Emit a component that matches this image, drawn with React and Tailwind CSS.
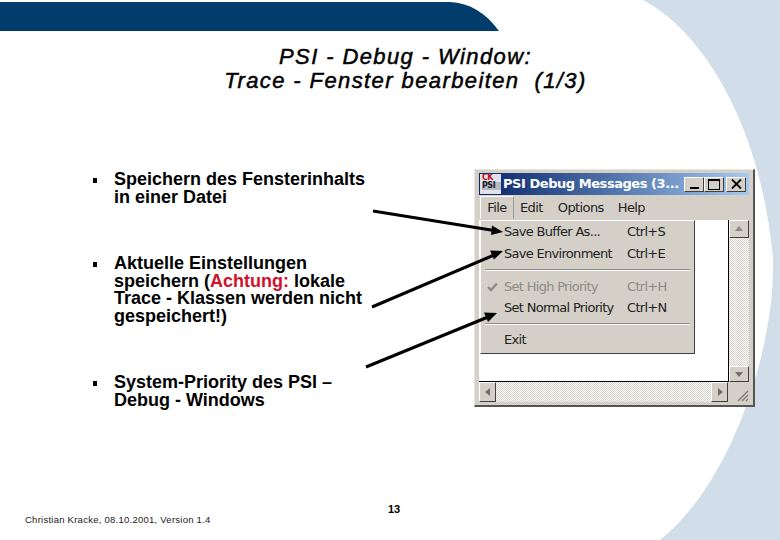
import { Fragment } from 'react';

const dither = 'bg-[repeating-conic-gradient(#d4d0c8_0_25%,#ffffff_0_50%)] bg-[length:2px_2px]';
const bevel = 'bg-[#d4d0c8] border border-t-white border-l-white border-r-[#404040] border-b-[#404040]';

const bullets = [
  [<Fragment key="a">Speichern des Fensterinhalts<br />in einer Datei</Fragment>, 'h-[35px]'],
  [
    <Fragment key="b">
      Aktuelle Einstellungen<br />
      speichern (<span className="text-[#d0112b]">Achtung:</span> lokale<br />
      Trace - Klassen werden nicht<br />
      gespeichert!)
    </Fragment>,
    'h-[70px]',
  ],
  [<Fragment key="c">System-Priority des PSI –<br />Debug - Windows</Fragment>, 'h-[35px]'],
];

const menuRows = [
  { label: 'Save Buffer As...', key: 'Ctrl+S', h: 'h-[21.5px]' },
  { label: 'Save Environment', key: 'Ctrl+E', h: 'h-[21.5px]' },
  { sep: 'h-[12px]' },
  { label: 'Set High Priority', key: 'Ctrl+H', off: true, check: true, h: 'h-[21px]' },
  { label: 'Set Normal Priority', key: 'Ctrl+N', h: 'h-[21.5px]' },
  { sep: 'h-[10.5px]' },
  { label: 'Exit', h: 'h-[21.5px]' },
];

const Arrows = () => (
  <svg className="absolute left-0 top-0 pointer-events-none" width="780" height="540">
    <path d="M373 211 L494 230.5 M372 307 L494 255 M366 367 L488 317" stroke="#000" strokeWidth="3" fill="none" />
    <polygon points="503,232 492,225.5 491,235" fill="#000" />
    <polygon points="503,251 490,250.5 494,259.5" fill="#000" />
    <polygon points="497,313 484,312.5 488,322" fill="#000" />
  </svg>
);

const ScrollButton = ({ dir, className }) => (
  <div className={`${bevel} flex items-center justify-center ${className}`}>
    <svg width="10" height="10" viewBox="0 0 10 10">
      {dir === 'up' && <path d="M5 2 L9 7 H1 Z" fill="#8a8a86" />}
      {dir === 'down' && <path d="M1 3 H9 L5 8 Z" fill="#6f6f6c" />}
      {dir === 'left' && <path d="M7 1 V9 L2 5 Z" fill="#6f6f6c" />}
      {dir === 'right' && <path d="M3 1 V9 L8 5 Z" fill="#6f6f6c" />}
    </svg>
  </div>
);

const CaptionButton = ({ children, className = '' }) => (
  <div className={`${bevel} w-[20px] h-[15px] flex items-center justify-center ${className}`}>{children}</div>
);

const DebugWindow = () => (
  <div className="relative w-[281px] h-[238px] bg-[#d4d0c8] border-t border-l border-[#e8e6e0] border-r-2 border-b-2 border-r-[#555] border-b-[#555] pt-[3px] px-[4px] pb-[3px] flex flex-col font-['DejaVu_Sans',sans-serif]">
    <div className="h-[22px] shrink-0 flex items-center bg-gradient-to-r from-[#0a246a] to-[#a6caf0] pl-[1px] pr-[3px]">
      <div className="w-[21px] h-[20px] bg-[#dfe2ea] flex flex-col pl-[2px] leading-none overflow-hidden">
        <span className="text-[8px] font-bold text-[#c01020] tracking-[-0.5px]">CK</span>
        <span className="text-[8px] font-bold text-[#1a1a2a] bg-[#b8bac2] tracking-[-0.5px]">PSI</span>
      </div>
      <span className="ml-[2px] text-[13px] font-bold text-white tracking-[-0.45px] whitespace-nowrap flex-1">PSI Debug Messages (3...</span>
      <CaptionButton>
        <span className="w-[9px] h-[2px] bg-black mt-[7px]" />
      </CaptionButton>
      <CaptionButton>
        <span className="w-[12px] h-[11px] border border-black border-t-2" />
      </CaptionButton>
      <CaptionButton className="ml-[2px]">
        <svg width="11" height="10" viewBox="0 0 11 10">
          <path d="M1 0.5 L10 9.5 M10 0.5 L1 9.5" stroke="#000" strokeWidth="1.8" />
        </svg>
      </CaptionButton>
    </div>

    <div className="h-[25px] shrink-0 flex items-center text-[13px] text-[#222] tracking-[-0.6px]">
      <span className="ml-[1px] w-[34px] h-[23px] flex items-center justify-center border border-t-white border-l-white border-r-[#9a9a94] border-b-[#d4d0c8] mr-[6px]">File</span>
      <span className="mr-[15px]">Edit</span>
      <span className="mr-[14px]">Options</span>
      <span>Help</span>
    </div>

    <div className="flex-1 flex flex-col min-h-0">
      <div className="flex-1 flex min-h-0">
        <div className="flex-1 bg-white border-r border-b border-black" />
        <div className={`w-[20px] flex flex-col ${dither}`}>
          <ScrollButton dir="up" className="h-[18px]" />
          <div className="flex-1" />
          <ScrollButton dir="down" className="h-[16px]" />
        </div>
      </div>
      <div className="h-[20px] shrink-0 flex">
        <div className={`flex-1 flex justify-between ${dither}`}>
          <ScrollButton dir="left" className="w-[17px]" />
          <ScrollButton dir="right" className="w-[17px]" />
        </div>
        <div className="w-[21px] flex items-end justify-end">
          <svg width="14" height="14" viewBox="0 0 14 14">
            <path d="M13 3 L3 13 M13 7 L7 13 M13 11 L11 13" stroke="#777" strokeWidth="1.2" />
          </svg>
        </div>
      </div>
    </div>

    <div className={`absolute left-[5px] top-[50px] w-[215px] h-[134px] ${bevel} text-[13px] text-[#222] tracking-[-0.7px]`}>
      {menuRows.map((row, i) =>
        row.sep ? (
          <div key={i} className={`${row.sep} flex items-center px-[4px]`}>
            <div className="w-full h-[2px] border-t border-[#8f8c85] border-b border-b-white" />
          </div>
        ) : (
          <div key={i} className={`relative ${row.h} flex items-center pl-[23px] ${row.off ? 'text-[#8d8b86]' : ''}`}>
            {row.check && (
              <svg className="absolute left-[6px] top-[6px]" width="11" height="10" viewBox="0 0 11 10">
                <path d="M1 5 L4 8 L10 1.5" stroke="#8d8b86" strokeWidth="2.4" fill="none" />
              </svg>
            )}
            <span className="w-[123px] whitespace-nowrap">{row.label}</span>
            {row.key && <span>{row.key}</span>}
          </div>
        ),
      )}
    </div>
  </div>
);

const App = () => (
  <div className="relative w-[780px] h-[540px] overflow-hidden bg-[#d1dde8] font-['Liberation_Sans',sans-serif] text-black">
    <svg className="absolute left-0 top-0" width="780" height="540">
      <path d="M0 0 H643 C700 30 760 120 773 258 C776 340 735 480 660 540 H0 Z" fill="#fff" />
    </svg>

    <div className="relative flex flex-col h-full">
      <div className="mt-[2px] h-[29px] flex shrink-0">
        <div className="w-[450px] bg-[#003d6c]" />
        <svg width="49" height="29" viewBox="0 0 49 29">
          <path d="M0 0 C20 1 36 11 49 29 H0 Z" fill="#003d6c" />
        </svg>
      </div>

      <h1 className="mt-[14px] w-[811px] text-center text-[22px] leading-[24px] tracking-[1.4px] italic font-normal [-webkit-text-stroke:0.5px_black]">
        PSI - Debug - Window:<br />
        <span className="whitespace-pre">Trace - Fenster bearbeiten  (1/3)</span>
      </h1>

      <div className="mt-[76px] flex">
        <ul className="w-[474px] pt-[2px] pl-[92px] flex flex-col gap-[49px] text-[18px] leading-[17.5px] font-bold">
          {bullets.map(([text, height], i) => (
            <li key={i} className={`flex ${height}`}>
              <span className="mt-[6.5px] ml-[1px] w-[4px] h-[5px] bg-black shrink-0" />
              <span className="ml-[17px] whitespace-nowrap">{text}</span>
            </li>
          ))}
        </ul>
        <DebugWindow />
      </div>

      <div className="mt-[94px] pl-[25px] flex items-start">
        <span className="mt-[11px] w-[363px] text-[9.5px] leading-[12px] tracking-[0.25px] text-[#222] whitespace-nowrap">
          Christian Kracke, 08.10.2001, Version 1.4
        </span>
        <span className="text-[11px] leading-[12px] font-bold">13</span>
      </div>
    </div>

    <Arrows />
  </div>
);

export default App;
